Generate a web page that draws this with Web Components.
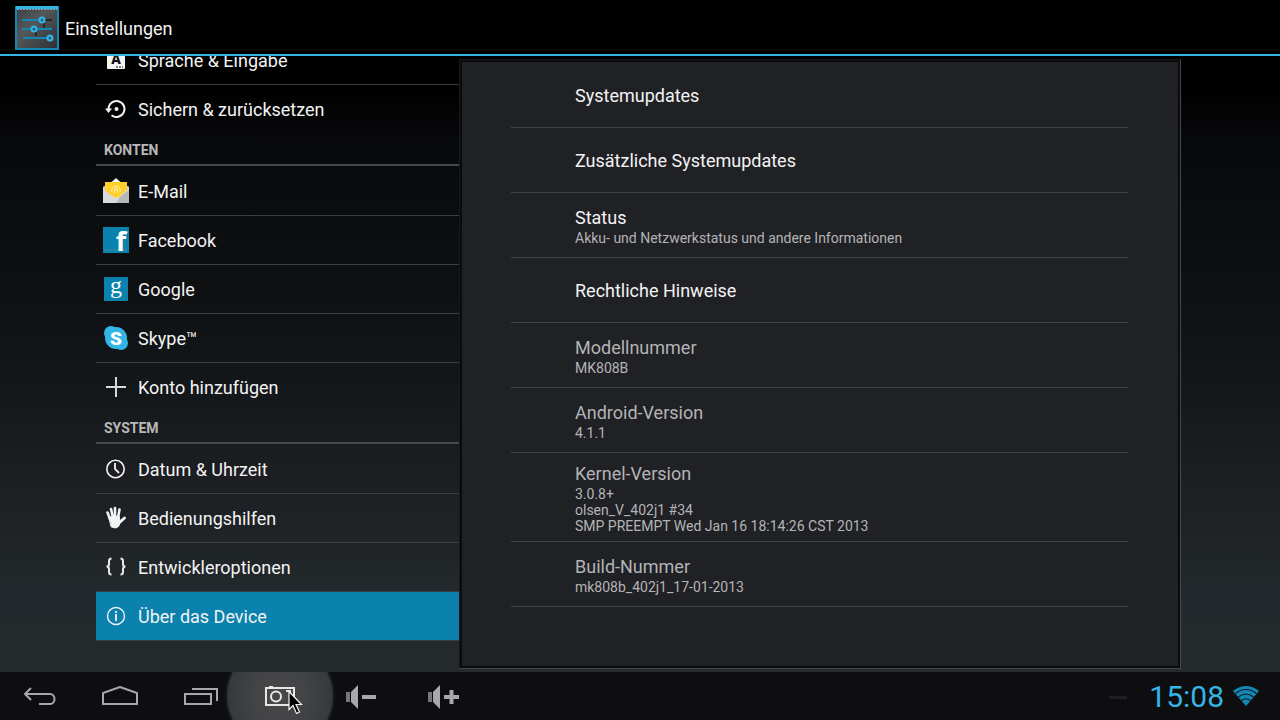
<!DOCTYPE html>
<html lang="de">
<head>
<meta charset="utf-8">
<meta name="viewport" content="width=device-width, initial-scale=1">
<title>Einstellungen</title>
<style>
  body {
    margin: 0;
    color: #f3f3f3;
    font-family: Roboto, "Noto Sans", sans-serif;
    background: #000;
  }
</style>
</head>
<body>

<settings-screen>
  <app-bar slot="top">Einstellungen</app-bar>

  <side-list slot="side">
    <side-item>
      <svg slot="icon" width="28" height="28" viewBox="0 0 28 28" aria-hidden="true">
        <rect x="5" y="5" width="18" height="18" rx="1" fill="#f3f3f3"/>
        <text x="14" y="18" text-anchor="middle" font-size="14" font-weight="900" fill="#111">A</text>
        <path d="M14 21h2M17 21h2M20 21h1" stroke="#111" stroke-width="1"/>
      </svg>
      Sprache &amp; Eingabe
    </side-item>
    <side-item>
      <svg slot="icon" width="28" height="28" viewBox="0 0 28 28" fill="none" aria-hidden="true">
        <path d="M6.500 14a8 8 0 1 1 3 6.200" stroke="#f3f3f3" stroke-width="2"/>
        <path d="M3 13.500h7l-3.500 4.500z" fill="#f3f3f3"/>
        <circle cx="14.500" cy="14" r="2" fill="#f3f3f3"/>
      </svg>
      Sichern &amp; zurücksetzen
    </side-item>
    <side-heading>KONTEN</side-heading>
    <side-item first>
      <svg slot="icon" width="28" height="28" viewBox="0 0 28 28" aria-hidden="true">
        <path d="M1 10L14 2l13 8v16H1z" fill="#d9dadb"/>
        <path d="M1 10l7-4v12zM27 10l-7-4v12z" fill="#c4c6c8"/>
        <path d="M3 5h22v8l-7 6-4 2-4-2-7-6z" fill="#ffcf2b"/>
        <path d="M10 5l4-4 4 4z" fill="#f0f0f0"/>
        <path d="M14 26l4-6 9-7v13z" fill="#b4b6b9"/>
        <path d="M10 15a4.300 4.300 0 1 1 8 0M12.500 16v-3a1.500 1.500 0 0 1 3 0v3" fill="none" stroke="#fff3ae" stroke-width="1"/>
      </svg>
      E-Mail
    </side-item>
    <side-item>
      <svg slot="icon" width="28" height="28" viewBox="0 0 28 28" aria-hidden="true">
        <rect x="1" y="1" width="26" height="26" fill="#0b81ad"/>
        <path d="M3 24h22" stroke="#6f93a3" stroke-dasharray="1 1"/>
        <text x="19" y="25" text-anchor="middle" font-family="Open Sans" font-size="27" font-weight="700" fill="#fff">f</text>
      </svg>
      Facebook
    </side-item>
    <side-item>
      <svg slot="icon" width="28" height="28" viewBox="0 0 28 28" aria-hidden="true">
        <rect x="2" y="2" width="24" height="24" fill="#0b81ad"/>
        <text x="14" y="18" text-anchor="middle" font-family="Liberation Serif" font-size="24" fill="#fff">g</text>
      </svg>
      Google
    </side-item>
    <side-item>
      <svg slot="icon" width="28" height="28" viewBox="0 0 28 28" aria-hidden="true">
        <circle cx="9" cy="9" r="7" fill="#33b5e5"/>
        <circle cx="19" cy="19" r="7" fill="#33b5e5"/>
        <circle cx="14" cy="14" r="11" fill="#33b5e5"/>
        <text x="14" y="21" text-anchor="middle" font-size="19" font-weight="900" fill="#fff">S</text>
      </svg>
      Skype™
    </side-item>
    <side-item>
      <svg slot="icon" width="28" height="28" viewBox="0 0 28 28" aria-hidden="true">
        <path d="M4 14h20M14 4v20" stroke="#d8d8d8" stroke-width="2"/>
      </svg>
      Konto hinzufügen
    </side-item>
    <side-heading>SYSTEM</side-heading>
    <side-item first>
      <svg slot="icon" width="28" height="28" viewBox="0 0 28 28" fill="none" stroke="#f3f3f3" aria-hidden="true">
        <circle cx="13.500" cy="14" r="8.700" stroke-width="1.600"/>
        <path d="M13 8v6l4 4" stroke-width="1.800"/>
      </svg>
      Datum &amp; Uhrzeit
    </side-item>
    <side-item>
      <svg slot="icon" width="28" height="28" viewBox="0 0 28 28" fill="none" stroke="#f3f3f3" stroke-linecap="round" aria-hidden="true">
        <path d="M5.500 8.500L8 15M9 5l2 9M13 4v10M17.500 5.500L16 14" stroke-width="2.600"/>
        <path d="M22.500 14L18 18" stroke-width="3"/>
        <path d="M7 13l10-1 1 5 1.500-1-3 6.500-3 1.500-4-1z" fill="#f3f3f3" stroke-width="1"/>
      </svg>
      Bedienungshilfen
    </side-item>
    <side-item>
      <svg slot="icon" width="28" height="28" viewBox="0 0 28 28" fill="none" stroke="#e8e8e8" stroke-width="2" aria-hidden="true">
        <path d="M9.500 5.500c-2 0-2.500.500-2.500 2.500v3c0 1.500-.5 2.500-2.500 2.500 2 0 2.500 1 2.500 2.500v3c0 2 .5 2.500 2.500 2.500M18.500 5.500c2 0 2.500.500 2.500 2.500v3c0 1.500.5 2.500 2.500 2.500-2 0-2.500 1-2.500 2.500v3c0 2-.5 2.500-2.500 2.500"/>
      </svg>
      Entwickleroptionen
    </side-item>
    <side-item selected>
      <svg slot="icon" width="28" height="28" viewBox="0 0 28 28" fill="none" stroke="#f3f3f3" aria-hidden="true">
        <circle cx="14" cy="14" r="8.500" stroke-width="1.400"/>
        <path d="M14 12v7M14 9v2" stroke-width="1.800"/>
      </svg>
      Über das Device
    </side-item>
  </side-list>

  <info-panel slot="main">
    <info-row href="#updates">Systemupdates</info-row>
    <info-row href="#more-updates">Zusätzliche Systemupdates</info-row>
    <info-row href="#status">Status<span slot="summary">Akku- und Netzwerkstatus und andere Informationen</span></info-row>
    <info-row href="#legal">Rechtliche Hinweise</info-row>
    <info-row>Modellnummer<span slot="summary">MK808B</span></info-row>
    <info-row>Android-Version<span slot="summary">4.1.1</span></info-row>
    <info-row>Kernel-Version<span slot="summary">3.0.8+<br>olsen_V_402j1 #34<br>SMP PREEMPT Wed Jan 16 18:14:26 CST 2013</span></info-row>
    <info-row>Build-Nummer<span slot="summary">mk808b_402j1_17-01-2013</span></info-row>
  </info-panel>

  <nav-bar slot="bottom">
    <nav-key label="Zurück">
      <svg width="36" height="24" viewBox="0 0 36 24" fill="none" stroke="#a8a8aa" stroke-width="2">
        <path d="M4 8h24c6 0 6 10 0 10H17M9 2L3 8l6 6"/>
      </svg>
    </nav-key>
    <nav-key label="Startseite">
      <svg width="38" height="24" viewBox="0 0 38 24" fill="none" stroke="#a8a8aa" stroke-width="2">
        <path d="M2 18V7l17-6 17 6v11z"/>
      </svg>
    </nav-key>
    <nav-key label="Letzte Apps">
      <svg width="36" height="24" viewBox="0 0 36 24" fill="none" stroke="#a8a8aa" stroke-width="2">
        <path d="M3 8h26v10H3zM10 3h25v12"/>
      </svg>
    </nav-key>
    <nav-key label="Screenshot" pressed>
      <svg width="32" height="24" viewBox="0 0 32 24" fill="none" stroke="#e6e6e6" stroke-width="2">
        <path d="M2 2h28v17H2zM5 1h4M22 5h4v3"/>
        <circle cx="12" cy="10.500" r="5"/>
      </svg>
    </nav-key>
    <nav-key label="Leiser">
      <svg width="34" height="28" viewBox="-2 0 34 28">
        <path d="M1 8h4v10H1z" fill="#77777a"/>
        <path d="M6 8l7-7v24l-7-7z" fill="#a8a8aa"/>
        <path d="M17 13h14" stroke="#a8a8aa" stroke-width="4"/>
      </svg>
    </nav-key>
    <nav-key label="Lauter">
      <svg width="38" height="28" viewBox="-6 0 38 28">
        <path d="M1 8h4v10H1z" fill="#77777a"/>
        <path d="M6 8l7-7v24l-7-7z" fill="#a8a8aa"/>
        <path d="M17 13h15M24.500 6v14" stroke="#a8a8aa" stroke-width="4"/>
      </svg>
    </nav-key>
  </nav-bar>
</settings-screen>

<script>
// small base: every element just stamps its markup into a shadow root
class BaseElement extends HTMLElement {
  constructor() {
    super();
    const template = document.createElement('template')
    template.innerHTML = this.constructor.markup
    this.attachShadow({mode: 'open'})
    this.shadowRoot.appendChild(template.content.cloneNode(true))
  }
}

// <settings-screen>
class SettingsScreen extends BaseElement {
  static markup = `
<style>
  :host {
    display: flex;
    flex-direction: column;
    height: 100vh;
    overflow: hidden;
    background: linear-gradient(#000 12%, #08090b 20%, #0e1012 40%, #14181b 55%, #1c1e22 66%, #22282b 82%, #262b2e);
  }
  main {
    flex: 1;
    min-height: 0;
    display: grid;
    grid-template-columns: minmax(0, 363fr) minmax(0, 722fr);
    grid-template-rows: minmax(0, 1fr);
    padding: 0 99px 0 96px;
  }
</style>
<slot name="top"></slot>
<main>
  <slot name="side"></slot>
  <slot name="main"></slot>
</main>
<slot name="bottom"></slot>
`
}

// <app-bar>
class AppBar extends BaseElement {
  static markup = `
<style>
  :host {
    display: block;
    background: #000;
    border-bottom: 2px solid #33b5e5;
  }
  header {
    display: flex;
    align-items: center;
    gap: 5px;
    box-sizing: border-box;
    height: 54px;
    padding: 2px 0 0 14px;
  }
  h1 {
    margin: 0;
    padding-top: 2px;
    font-size: 18px;
    font-weight: 400;
    line-height: 24px;
  }
</style>
<header>
  <svg width="46" height="44" viewBox="0 0 46 44" aria-hidden="true">
    <defs>
      <linearGradient id="face" x1="0" y1="0" x2="1" y2="1">
        <stop offset="0" stop-color="#3c3f42"/>
        <stop offset=".4" stop-color="#55585b"/>
        <stop offset="1" stop-color="#2b2e32"/>
      </linearGradient>
    </defs>
    <rect x="2" y="1" width="42" height="42" fill="url(#face)" stroke="#1487b4" stroke-width="2"/>
    <path d="M2 1.500h42" stroke="#33b5e5" stroke-width="3"/>
    <path d="M3 3.500h40" stroke="#8fa9b4" stroke-width="1" stroke-dasharray="2 1"/>
    <path d="M8 14h18M8 23h30M9 32h27" stroke="#1487b4" stroke-width="2"/>
    <path d="M30 14h8" stroke="#24282b" stroke-width="2"/>
    <path d="M30 17v5M22 26v4" stroke="#24282b" stroke-width="2"/>
    <g fill="#24617a" stroke="#33b5e5" stroke-width="2">
      <circle cx="28" cy="14" r="2.500"/>
      <circle cx="20" cy="23" r="2.500"/>
      <circle cx="36" cy="32" r="2.500"/>
    </g>
  </svg>
  <h1><slot></slot></h1>
</header>
`
}

// <side-list>, kept at its bottom end
class SideList extends BaseElement {
  static markup = `
<style>
  :host {
    display: flex;
    overflow: hidden;
  }
  nav {
    flex: 1;
    display: flex;
    flex-direction: column;
    justify-content: flex-end;
    padding-bottom: 31px;
  }
</style>
<nav><slot></slot></nav>
`
}

// <side-heading>
class SideHeading extends BaseElement {
  static markup = `
<style>
  :host {
    display: block;
    flex: none;
    border-bottom: 2px solid #46484b;
  }
  h2 {
    margin: 0;
    padding: 4px 8px 0;
    font-size: 14px;
    font-weight: 700;
    line-height: 27px;
    color: #b8b8ba;
  }
</style>
<h2><slot></slot></h2>
`
}

// <side-item first selected>
class SideItem extends BaseElement {
  static markup = `
<style>
  :host {
    display: block;
    flex: none;
    border-top: 1px solid #3c3f42;
  }
  :host([first]) {
    border-top-color: transparent;
  }
  :host([selected]) {
    border-bottom: 1px solid #3c3f42;
    background: #0b81ad;
  }
  a {
    display: flex;
    align-items: center;
    gap: 8px;
    height: 48px;
    padding: 0 6px;
    color: inherit;
    font-size: 18px;
    line-height: 24px;
    text-decoration: none;
    white-space: nowrap;
  }
  span {
    padding-top: 2px;
  }
</style>
<a href="#"><slot name="icon"></slot><span><slot></slot></span></a>
`

  connectedCallback() {
    if (this.hasAttribute('selected')) {
      this.shadowRoot.querySelector('a').setAttribute('aria-current', 'page')
    }
  }
}

// <info-panel>
class InfoPanel extends BaseElement {
  static markup = `
<style>
  :host {
    display: flex;
    margin: 3px 0;
    box-sizing: border-box;
    border: 1px solid #15191c;
    border-right-color: #46484b;
    border-bottom-color: #46484b;
    background: #0a0b0c;
    padding: 2px;
  }
  section {
    flex: 1;
    padding: 1px 50px 0 49px;
    background: #202125;
    overflow: hidden;
  }
</style>
<section><slot></slot></section>
`
}

// <info-row href>: a link when it leads somewhere, else plain and dimmed
class InfoRow extends BaseElement {
  static markup = `
<style>
  :host {
    display: block;
    border-bottom: 1px solid #414246;
  }
  .row {
    display: flex;
    flex-direction: column;
    justify-content: center;
    box-sizing: border-box;
    min-height: 64px;
    padding: 9px 64px 7px;
    color: #b4b4b6;
    text-decoration: none;
  }
  a.row .title {
    color: #f3f3f3;
  }
  .title {
    font-size: 18px;
    line-height: 24px;
  }
  .summary {
    font-size: 14px;
    line-height: 16px;
  }
</style>
<div class="row">
  <span class="title"><slot></slot></span>
  <span class="summary"><slot name="summary"></slot></span>
</div>
`

  connectedCallback() {
    const href = this.getAttribute('href')
    if (!href) return
    const row = this.shadowRoot.querySelector('.row')
    const link = document.createElement('a')
    link.className = 'row'
    link.href = href
    link.append(...row.childNodes)
    row.replaceWith(link)
  }
}

// <nav-bar>
class NavBar extends BaseElement {
  static markup = `
<style>
  :host {
    display: flex;
    justify-content: space-between;
    height: 48px;
    background: #0e0e10;
  }
  .keys, .status {
    display: flex;
    align-items: center;
  }
  .status {
    gap: 8px;
    padding-right: 20px;
    color: #33b5e5;
  }
  .dash {
    width: 18px;
    height: 3px;
    margin: 2px 14px 0 0;
    background: #1c1f23;
  }
  time {
    padding-top: 2px;
    font-size: 30px;
    line-height: 40px;
  }
</style>
<div class="keys"><slot></slot></div>
<div class="status">
  <span class="dash"></span>
  <time>15:08</time>
  <svg width="28" height="22" viewBox="0 0 28 22" aria-hidden="true">
    <path d="M1 6Q14-4 27 6L14 21z" fill="#1487b4"/>
    <path d="M3.500 8.500Q14 .5 24.500 8.500M6.500 12Q14 6 21.500 12M9.500 15.500Q14 12 18.500 15.500" fill="none" stroke="#0e1a20" stroke-width="1.200"/>
  </svg>
</div>
`
}

// <nav-key label pressed>
class NavKey extends BaseElement {
  static markup = `
<style>
  :host {
    display: block;
    position: relative;
    width: 80px;
    height: 48px;
  }
  button {
    position: relative;
    display: flex;
    align-items: center;
    justify-content: center;
    width: 100%;
    height: 100%;
    padding: 4px 0 0;
    border: 0;
    background: none;
  }
  .glow, .pointer {
    display: none;
    position: absolute;
  }
  :host([pressed]) .glow {
    display: block;
    inset: 0 -16px;
    background: radial-gradient(circle 56px at 50% 50%, #48484a 0, #424345 50%, #36393b 93%, #14181a 96%, transparent 100%);
  }
  :host([pressed]) .pointer {
    display: block;
    left: 48px;
    top: 18px;
  }
</style>
<span class="glow"></span>
<button type="button"><slot></slot></button>
<svg class="pointer" width="16" height="26" viewBox="0 0 16 26" aria-hidden="true">
  <path d="M1 1.500v18l4-4 3.500 8 3-1.500-3.500-7.500h5.500z" fill="#000" stroke="#f3f3f3" stroke-width="1.200"/>
</svg>
`

  connectedCallback() {
    this.shadowRoot.querySelector('button').setAttribute('aria-label', this.getAttribute('label'))
  }
}

window.customElements.define('settings-screen', SettingsScreen);
window.customElements.define('app-bar', AppBar);
window.customElements.define('side-list', SideList);
window.customElements.define('side-heading', SideHeading);
window.customElements.define('side-item', SideItem);
window.customElements.define('info-panel', InfoPanel);
window.customElements.define('info-row', InfoRow);
window.customElements.define('nav-bar', NavBar);
window.customElements.define('nav-key', NavKey);
</script>
</body>
</html>
